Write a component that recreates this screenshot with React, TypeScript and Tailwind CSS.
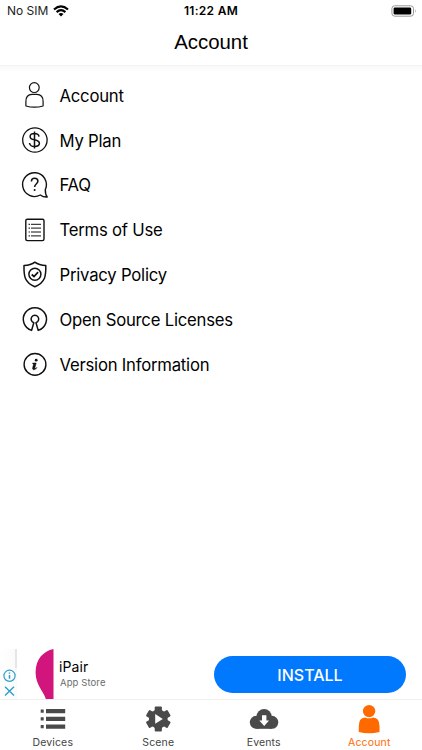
import React, { useState } from 'react';

const AccountIcon = () => (
  <svg width="30" height="30" viewBox="0 0 30 30" fill="none" stroke="#111" strokeWidth="1.2">
    <circle cx="14.3" cy="7.6" r="4.9" />
    <path d="M5.9 26V21.5Q5.9 14.4 12 14.4H16.8Q23.1 14.4 23.1 21.5V26Q14.5 28.4 5.9 26Z" strokeLinejoin="round" />
  </svg>
);

const PlanIcon = () => (
  <svg width="30" height="30" viewBox="0 0 30 30" fill="none" stroke="#111" strokeWidth="1.3">
    <circle cx="14.9" cy="15" r="12.2" />
    <path d="M19 11.6C18.7 9.5 17 8.6 14.4 8.6C11.8 8.6 10.1 9.8 10.1 11.7C10.1 13.7 11.9 14.3 14.5 14.8C17.3 15.4 19.4 16 19.4 18.3C19.4 20.4 17.3 21.5 14.6 21.5C11.6 21.5 9.8 20.3 9.5 18M14.5 6.6V23.6" strokeWidth="1.5" />
  </svg>
);

const FaqIcon = () => (
  <svg width="30" height="30" viewBox="0 0 30 30" fill="none" stroke="#111" strokeWidth="1.4">
    <path d="M25.3 19.6A11.9 11.9 0 1 0 20.3 25Q23.4 27.3 27.2 27Q25.2 24.6 25.3 19.6Z" strokeLinejoin="round" />
    <path d="M11.4 11.4C11.4 9.3 12.7 8.3 14.6 8.3C16.6 8.3 17.9 9.6 17.9 11.3C17.9 13.7 14.6 13.8 14.6 17.1" strokeWidth="1.5" />
    <circle cx="14.6" cy="19.9" r="1" fill="#111" stroke="none" />
  </svg>
);

const TermsIcon = () => (
  <svg width="30" height="30" viewBox="0 0 30 30" fill="none" stroke="#111" strokeWidth="1.4">
    <rect x="5.8" y="4.2" width="18.2" height="21.4" rx="1.5" />
    <path d="M11 9.3H21M11 13.1H21M11 17H21M11 20.9H21" strokeWidth="1" />
    <path d="M8.6 9.3H9.9M8.6 13.1H9.9M8.6 17H9.9M8.6 20.9H9.9" strokeWidth="1.2" />
  </svg>
);

const PrivacyIcon = () => (
  <svg width="30" height="30" viewBox="0 0 30 30" fill="none" stroke="#111" strokeWidth="1.5">
    <path d="M14.9 2.2C12 4.5 8.2 5.5 4 5.6C3.8 15.5 4.2 22.5 14.9 26.7C25.6 22.5 26 15.5 25.8 5.6C21.6 5.5 17.8 4.5 14.9 2.2Z" strokeLinejoin="round" />
    <circle cx="14.9" cy="14.3" r="6" />
    <path d="M11.7 14.5L14 16.5L18.1 12.1" strokeWidth="1.7" />
  </svg>
);

const LicenseIcon = () => (
  <svg width="30" height="30" viewBox="0 0 30 30" fill="none" stroke="#111" strokeWidth="1.5" strokeLinejoin="round">
    <path d="M11.6 26.4A11.6 11.6 0 1 1 18.2 26.4L16 18.7A3.8 3.8 0 1 0 13.8 18.7L11.6 26.4Z" />
  </svg>
);

const VersionIcon = () => (
  <svg width="30" height="30" viewBox="0 0 30 30" fill="none" stroke="#111" strokeWidth="1.4">
    <circle cx="15" cy="15.4" r="10.9" />
    <circle cx="16.2" cy="11.2" r="1.4" fill="#111" stroke="none" />
    <path d="M12.7 14H16.2L14.7 19.6Q15.6 19.6 17 18.5Q15.5 20.9 13.4 20.7Q12.1 20.4 12.7 18.5L13.6 15.1L12.7 14.8Z" fill="#111" strokeWidth="0.5" />
  </svg>
);

const DevicesIcon = () => (
  <svg width="30" height="32" viewBox="0 0 30 32" fill="#4a4a4a">
    <path d="M2.7 6.6h3v3.2h-3zM8 6.1h19.2v4.2H8zM2.7 14.3h3v3.2h-3zM8 13.8h19.2v4.2H8zM2.7 22h3v3.2h-3zM8 21.5h19.2v4.2H8z" />
  </svg>
);

const SceneIcon = () => (
  <svg width="30" height="32" viewBox="0 0 30 32" fill="#4a4a4a">
    <circle cx="15.3" cy="16" r="9.4" />
    <rect x="11.7" y="3.6" width="7.2" height="24.8" rx="1" />
    <rect x="11.7" y="3.6" width="7.2" height="24.8" rx="1" transform="rotate(60 15.3 16)" />
    <rect x="11.7" y="3.6" width="7.2" height="24.8" rx="1" transform="rotate(120 15.3 16)" />
    <path d="M12.2 11v9.8l7.6-4.9z" fill="#fff" />
  </svg>
);

const EventsIcon = () => (
  <svg width="30" height="32" viewBox="0 0 30 32" fill="#4a4a4a">
    <circle cx="7.3" cy="19.3" r="6.5" />
    <circle cx="15.1" cy="13.6" r="7.6" />
    <circle cx="22.8" cy="19.3" r="6.5" />
    <rect x="7.3" y="16" width="15.5" height="9.8" />
    <path d="M13 12.2h4.4v5.4h2.7l-4.9 5.3-4.9-5.3h2.7z" fill="#fff" />
  </svg>
);

const ProfileIcon = () => (
  <svg width="30" height="32" viewBox="0 0 30 32" fill="#ff6a00">
    <circle cx="15.1" cy="8.1" r="6.2" />
    <path d="M4.8 29V23Q4.8 14.8 11 14.4Q15 16.3 19.2 14.4Q25.5 14.8 25.5 23V29Q15 31.6 4.8 29Z" />
  </svg>
);

const menu = [
  { name: 'Account', icon: AccountIcon },
  { name: 'My Plan', icon: PlanIcon },
  { name: 'FAQ', icon: FaqIcon },
  { name: 'Terms of Use', icon: TermsIcon },
  { name: 'Privacy Policy', icon: PrivacyIcon },
  { name: 'Open Source Licenses', icon: LicenseIcon },
  { name: 'Version Information', icon: VersionIcon },
];

const tabs = [
  { name: 'Devices', icon: DevicesIcon },
  { name: 'Scene', icon: SceneIcon },
  { name: 'Events', icon: EventsIcon },
  { name: 'Account', icon: ProfileIcon },
];

function StatusBar() {
  return (
    <div className="flex h-[22px] items-center justify-between pl-[7px] pr-[5px] text-[12px] leading-[22px]">
      <div className="flex w-[120px] items-center gap-[5px]">
        <span className="text-[#222]">No SIM</span>
        <svg width="16" height="12" viewBox="0 0 16 12" fill="none" stroke="#000" strokeWidth="2.2">
          <path d="M1 4.5Q8-1.6 15 4.5M3.6 7.1Q8 3.3 12.4 7.1" />
          <path d="M8 11.5L5.5 8.9Q8 7 10.5 8.9Z" fill="#000" stroke="none" />
        </svg>
      </div>
      <span className="font-semibold tracking-[0.3px]">11:22 AM</span>
      <div className="flex w-[122px] justify-end">
        <svg width="26" height="12" viewBox="0 0 26 12">
          <rect x="0.9" y="0.8" width="21.6" height="10.4" rx="2.8" fill="none" stroke="#999" />
          <rect x="2.6" y="2.4" width="17.6" height="7.2" rx="1.3" />
          <path d="M24 4.2Q25.5 6 24 7.8Z" fill="#999" />
        </svg>
      </div>
    </div>
  );
}

function AdBanner() {
  return (
    <div className="flex h-[51px] pt-px">
      <div className="flex w-[17px] flex-col items-center bg-gradient-to-r from-white to-[#fafafa]">
        <div className="h-[19px] w-[2px] self-end bg-[#e6e6e6]" />
        <svg className="ml-px" width="16" height="31" viewBox="0 0 16 31" fill="none" stroke="#2ba0c8" strokeWidth="1.2">
          <circle cx="8.5" cy="7.8" r="5.6" />
          <path d="M8.5 6.9V10.8M8.5 4.4V5.8" strokeWidth="1.5" />
          <path d="M4 18.8L13 27.4M13 18.8L4 27.4" strokeWidth="1.4" />
        </svg>
      </div>
      <svg className="ml-[18px]" width="19" height="50" viewBox="0 0 19 50">
        <path d="M18.5 0V50H10.8C8.5 42 .6 36 .6 23.5C.6 10 8.2 2.3 18.5 0Z" fill="#d1157c" />
      </svg>
      <div className="ml-[5px] flex-1 pt-[8px]">
        <div className="text-[14px] leading-[20px] tracking-[0.1px]">iPair</div>
        <div className="pl-px text-[9.5px] leading-[11px] tracking-[0.1px] text-[#6c6c6c]">App Store</div>
      </div>
      <button className="mr-[16px] mt-[7px] h-[37px] w-[192px] rounded-full bg-[#0079ff] text-[16px] font-medium text-white">
        INSTALL
      </button>
    </div>
  );
}

function App() {
  const [activeTab, setActiveTab] = useState(3);

  return (
    <div className="flex h-[750px] w-[422px] flex-col overflow-hidden bg-white font-['Inter',sans-serif] text-black">
      <StatusBar />
      <header className="h-[43px] text-center font-['Liberation_Sans',sans-serif] text-[20.4px] leading-[41px]">
        <h1>Account</h1>
      </header>
      <div className="h-[8px] border-t border-[#f3f3f3] bg-gradient-to-b from-[#f9f9f9] to-white" />

      <main className="flex-1">
        {menu.map(({ name, icon: Icon }) => (
          <div key={name} className="flex h-[44.8px] items-center pl-[20px]">
            <Icon />
            <span className="ml-[9.5px] pt-px text-[16.7px] leading-[24px] tracking-[-0.22px]">{name}</span>
          </div>
        ))}
      </main>

      <AdBanner />
      <nav className="grid h-[51px] grid-cols-4 border-t border-[#efefef]">
        {tabs.map(({ name, icon: Icon }, i) => (
          <button
            key={name}
            onClick={() => setActiveTab(i)}
            className={`flex flex-col items-center pt-[3px] ${i === activeTab ? 'text-[#ff6a00]' : 'text-[#444]'}`}
          >
            <Icon />
            <span className="text-[10.5px] leading-[16px] tracking-[0.15px]">{name}</span>
          </button>
        ))}
      </nav>
    </div>
  );
}

export default App;
